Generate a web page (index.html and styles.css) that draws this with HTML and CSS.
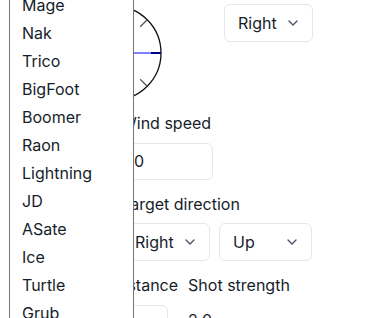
FILE: index.html
```html
<!DOCTYPE html>
<html>
<head>
<meta charset="utf-8">
<link rel="stylesheet" href="styles.css">
</head>
<body>
<div class="page">
  <div class="top">
    <svg class="compass" width="96" height="96" viewBox="0 0 96 96">
      <circle cx="48" cy="48" r="47" fill="none" stroke="#111" stroke-width="1.3"/>
      <line x1="81.2" y1="14.8" x2="74.2" y2="21.8" stroke="#555" stroke-width="1.3"/>
      <line x1="81.2" y1="81.2" x2="74.2" y2="74.2" stroke="#555" stroke-width="1.3"/>
      <line x1="14.8" y1="14.8" x2="21.8" y2="21.8" stroke="#555" stroke-width="1.3"/>
      <line x1="14.8" y1="81.2" x2="21.8" y2="74.2" stroke="#555" stroke-width="1.3"/>
      <line x1="48" y1="48" x2="85" y2="48" stroke="#8080ff" stroke-width="2"/>
      <line x1="85" y1="48" x2="95" y2="48" stroke="#000080" stroke-width="2"/>
    </svg>
    <div class="select sel-top"><span>Right</span><svg class="chev" width="10" height="6" viewBox="0 0 10 6"><path d="M1 1l4 4 4-4" fill="none" stroke="#4b5563" stroke-width="1.4" stroke-linecap="round" stroke-linejoin="round"/></svg></div>
  </div>
  <div class="form">
    <div class="label">Wind speed</div>
    <div class="input wind">0</div>
    <div class="label">Target direction</div>
    <div class="row">
      <div class="select sel-a"><span>Right</span><svg class="chev" width="10" height="6" viewBox="0 0 10 6"><path d="M1 1l4 4 4-4" fill="none" stroke="#4b5563" stroke-width="1.4" stroke-linecap="round" stroke-linejoin="round"/></svg></div>
      <div class="select sel-b"><span>Up</span><svg class="chev" width="10" height="6" viewBox="0 0 10 6"><path d="M1 1l4 4 4-4" fill="none" stroke="#4b5563" stroke-width="1.4" stroke-linecap="round" stroke-linejoin="round"/></svg></div>
    </div>
    <div class="row pair">
      <div class="field">
        <div class="label">Distance</div>
        <div class="input dist"></div>
      </div>
      <div class="field">
        <div class="label">Shot strength</div>
        <div class="value">2.0</div>
      </div>
    </div>
  </div>
  <ul class="list">
    <li>Mage</li>
    <li>Nak</li>
    <li>Trico</li>
    <li>BigFoot</li>
    <li>Boomer</li>
    <li>Raon</li>
    <li>Lightning</li>
    <li>JD</li>
    <li>ASate</li>
    <li>Ice</li>
    <li>Turtle</li>
    <li>Grub</li>
  </ul>
</div>
</body>
</html>
```

FILE: styles.css
```css
html, body {
  margin: 0;
  padding: 0;
  background: #fff;
  overflow: hidden;
}
body {
  font-family: Inter, "Noto Sans", sans-serif;
  font-size: 16px;
  color: #161d2a;
}
.page {
  position: relative;
  height: 318px;
  overflow: hidden;
}
.top {
  display: flex;
  align-items: flex-start;
  padding-left: 66px;
  padding-top: 5px;
}
.compass {
  display: block;
  flex: none;
}
.select {
  box-sizing: border-box;
  display: flex;
  align-items: center;
  justify-content: space-between;
  height: 38px;
  border: 1px solid #e5e7eb;
  border-radius: 6px;
  padding: 0 14px 0 13px;
  background: #fff;
}
.chev {
  display: block;
}
.sel-top {
  margin-left: 62px;
  margin-top: -1px;
  width: 89px;
}
.form {
  padding-left: 121px;
  margin-top: 10px;
}
.label {
  line-height: 24px;
}
.input {
  box-sizing: border-box;
  height: 37px;
  border: 1px solid #e5e7eb;
  border-radius: 6px;
  padding: 0 12px;
  line-height: 35px;
  margin-top: 8px;
}
.wind {
  width: 92px;
  margin-bottom: 12px;
}
.row {
  display: flex;
  gap: 9px;
  margin-top: 7px;
}
.sel-a { width: 89px; }
.sel-b { width: 93px; }
.pair {
  gap: 10px;
  margin-top: 12px;
  margin-left: -9px;
}
.dist {
  width: 56px;
}
.value {
  margin-top: 8px;
  line-height: 30px;
}
.list {
  position: absolute;
  left: 9px;
  top: -9px;
  width: 125px;
  box-sizing: border-box;
  margin: 0;
  padding: 0;
  list-style: none;
  background: #fff;
  border: 1px solid #767676;
  border-top: none;
  border-bottom: none;
}
.list li {
  height: 28px;
  line-height: 29px;
  padding-left: 12px;
}
```
